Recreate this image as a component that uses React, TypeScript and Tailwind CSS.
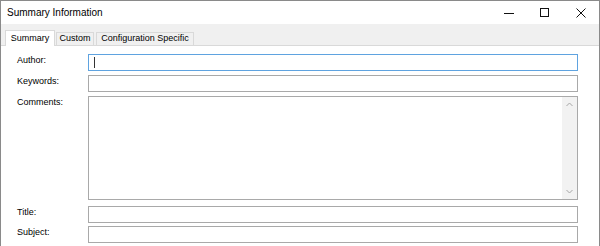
import React from "react";

const font = { fontFamily: '"Liberation Sans", Arial, sans-serif' };

function Field({ label, focused }: { label: string; focused?: boolean }) {
  return (
    <div className="flex items-start">
      <div className="w-[87px] shrink-0 pl-[16px] text-[9px] leading-[12px] text-black">{label}</div>
      <div
        className={
          focused
            ? "flex h-[17px] flex-1 items-center border border-[#5fa3e0] bg-white pl-[5px]"
            : "h-[17px] flex-1 border border-[#a9a9a9] bg-white"
        }
      >
        {focused && <div className="h-[11px] w-px bg-[#333]" />}
      </div>
    </div>
  );
}

export default function App() {
  return (
    <div
      style={font}
      className="flex h-[246px] w-[600px] flex-col overflow-hidden border-x border-t border-[#8a8a8a] bg-white"
    >
      {/* title bar */}
      <div className="flex h-[23px] shrink-0 items-center justify-between">
        <span className="pl-[6px] text-[10px] text-black">Summary Information</span>
        <div className="flex h-full items-center">
          <div className="flex h-full w-[36px] items-center justify-center">
            <svg width="10" height="10" viewBox="0 0 10 10">
              <line x1="0" y1="5.5" x2="10" y2="5.5" stroke="#111" strokeWidth="1" />
            </svg>
          </div>
          <div className="flex h-full w-[36px] items-center justify-center">
            <svg width="10" height="10" viewBox="0 0 10 10">
              <rect x="0.5" y="0.5" width="8" height="8" fill="none" stroke="#111" strokeWidth="1" />
            </svg>
          </div>
          <div className="flex h-full w-[36px] items-center justify-center">
            <svg width="10" height="10" viewBox="0 0 10 10">
              <path d="M0.5 0.5 L9.5 9.5 M9.5 0.5 L0.5 9.5" stroke="#111" strokeWidth="1" />
            </svg>
          </div>
        </div>
      </div>

      {/* tab strip */}
      <div className="flex h-[22px] shrink-0 items-end border-b border-[#d9d9d9] bg-[#f0f0f0] pl-[4px]">
        <div className="-mb-px flex h-[16px] w-[50px] items-center justify-center border-x border-t border-[#d9d9d9] bg-white text-[9px] text-black">
          Summary
        </div>
        <div className="ml-px flex h-[13px] w-[38px] items-center justify-center border-x border-t border-[#d9d9d9] text-[9px] text-black">
          Custom
        </div>
        <div className="ml-[2px] flex h-[13px] w-[98px] items-center justify-center border-x border-t border-[#d9d9d9] text-[9px] text-black">
          Configuration Specific
        </div>
      </div>

      {/* form */}
      <div className="flex flex-1 flex-col pr-[21px] pt-[8px]">
        <Field label="Author:" focused />
        <div className="h-[4px]" />
        <Field label="Keywords:" />
        <div className="h-[4px]" />
        <div className="flex items-start">
          <div className="w-[87px] shrink-0 pl-[16px] text-[9px] leading-[12px] text-black">Comments:</div>
          <div className="flex h-[104px] flex-1 justify-end border border-[#a9a9a9] bg-white">
            <div className="flex w-[15px] flex-col items-center justify-between bg-[#f2f2f2] py-[5px]">
              <svg width="7" height="5" viewBox="0 0 7 5">
                <path d="M0.5 4 L3.5 1 L6.5 4" fill="none" stroke="#a6a6a6" strokeWidth="1" />
              </svg>
              <svg width="7" height="5" viewBox="0 0 7 5">
                <path d="M0.5 1 L3.5 4 L6.5 1" fill="none" stroke="#a6a6a6" strokeWidth="1" />
              </svg>
            </div>
          </div>
        </div>
        <div className="h-[6px]" />
        <Field label="Title:" />
        <div className="h-[3px]" />
        <Field label="Subject:" />
      </div>
    </div>
  );
}
